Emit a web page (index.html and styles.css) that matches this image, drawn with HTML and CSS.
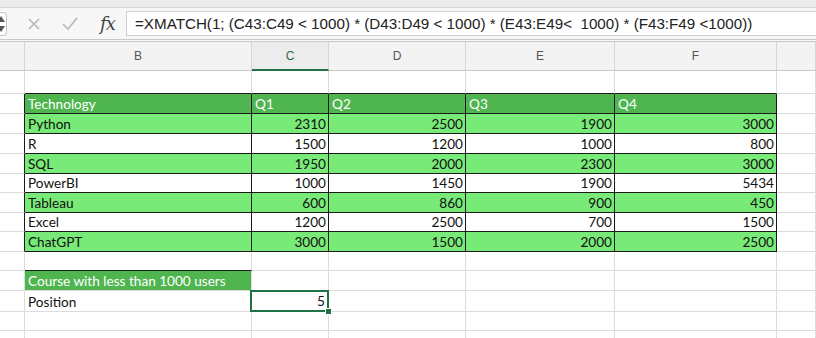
FILE: index.html
```html
<!DOCTYPE html>
<html>
<head>
    <title>XMATCH</title>
    <link rel="stylesheet" href="styles.css">
</head>
<body>
    <div class="topstrip"></div>
    <div class="formulabar">
        <div class="spinner">
            <svg width="10" height="22" viewBox="0 0 10 22">
                <path d="M0 9 L4 3 L8 9 Z" fill="#555"/>
                <path d="M0 13 L4 19 L8 13 Z" fill="#555"/>
            </svg>
        </div>
        <svg class="fbicon" width="14" height="14" viewBox="0 0 14 14">
            <path d="M2 2 L12 12 M12 2 L2 12" stroke="#b8b8b8" stroke-width="1.6" fill="none"/>
        </svg>
        <svg class="fbicon check" width="16" height="14" viewBox="0 0 16 14">
            <path d="M1 7 L6 12 L15 1" stroke="#b8b8b8" stroke-width="1.6" fill="none"/>
        </svg>
        <span class="fx">fx</span>
        <div class="formula">=XMATCH(1; (C43:C49 &lt; 1000) * (D43:D49 &lt; 1000) * (E43:E49&lt;&nbsp; 1000) * (F43:F49 &lt;1000))</div>
    </div>

    <div class="sheet">
        <div class="row colheads">
            <div class="c"></div><div class="c">B</div><div class="c active">C</div><div class="c">D</div><div class="c">E</div><div class="c">F</div><div class="c"></div>
        </div>

        <div class="row h23 above">
            <div class="c"></div><div class="c"></div><div class="c"></div><div class="c"></div><div class="c"></div><div class="c"></div><div class="c"></div>
        </div>

        <div class="row h20 tbl head">
            <div class="c"></div><div class="c">Technology</div><div class="c">Q1</div><div class="c">Q2</div><div class="c">Q3</div><div class="c">Q4</div><div class="c"></div>
        </div>
        <div class="row h20 tbl light">
            <div class="c"></div><div class="c">Python</div><div class="c n">2310</div><div class="c n">2500</div><div class="c n">1900</div><div class="c n">3000</div><div class="c"></div>
        </div>
        <div class="row h20 tbl">
            <div class="c"></div><div class="c">R</div><div class="c n">1500</div><div class="c n">1200</div><div class="c n">1000</div><div class="c n">800</div><div class="c"></div>
        </div>
        <div class="row h20 tbl light">
            <div class="c"></div><div class="c">SQL</div><div class="c n">1950</div><div class="c n">2000</div><div class="c n">2300</div><div class="c n">3000</div><div class="c"></div>
        </div>
        <div class="row h19 tbl">
            <div class="c"></div><div class="c">PowerBI</div><div class="c n">1000</div><div class="c n">1450</div><div class="c n">1900</div><div class="c n">5434</div><div class="c"></div>
        </div>
        <div class="row h20 tbl light">
            <div class="c"></div><div class="c">Tableau</div><div class="c n">600</div><div class="c n">860</div><div class="c n">900</div><div class="c n">450</div><div class="c"></div>
        </div>
        <div class="row h19 tbl">
            <div class="c"></div><div class="c">Excel</div><div class="c n">1200</div><div class="c n">2500</div><div class="c n">700</div><div class="c n">1500</div><div class="c"></div>
        </div>
        <div class="row h20 tbl light">
            <div class="c"></div><div class="c">ChatGPT</div><div class="c n">3000</div><div class="c n">1500</div><div class="c n">2000</div><div class="c n">2500</div><div class="c"></div>
        </div>

        <div class="row h19 spacer">
            <div class="c"></div><div class="c"></div><div class="c"></div><div class="c"></div><div class="c"></div><div class="c"></div><div class="c"></div>
        </div>
        <div class="row h20 result">
            <div class="c"></div><div class="c">Course with less than 1000 users</div><div class="c"></div><div class="c"></div><div class="c"></div><div class="c"></div><div class="c"></div>
        </div>
        <div class="row h20">
            <div class="c"></div><div class="c">Position</div><div class="c n selected">5<span class="handle"></span></div><div class="c"></div><div class="c"></div><div class="c"></div><div class="c"></div>
        </div>
        <div class="row h20">
            <div class="c"></div><div class="c"></div><div class="c"></div><div class="c"></div><div class="c"></div><div class="c"></div><div class="c"></div>
        </div>
        <div class="row h20">
            <div class="c"></div><div class="c"></div><div class="c"></div><div class="c"></div><div class="c"></div><div class="c"></div><div class="c"></div>
        </div>
    </div>
</body>
</html>
```

FILE: styles.css
```css
body {
    margin: 0;
    background: #fff;
    font-family: Lato, "Liberation Sans", sans-serif;
    overflow: hidden;
}
.topstrip {
    height: 7px;
    background: #ececec;
    border-bottom: 1px solid #d4d4d4;
}
.formulabar {
    height: 31px;
    display: flex;
    align-items: center;
    background: #f7f7f7;
    border-bottom: 3px double #c9c9c9;
}
.spinner {
    width: 8px;
    height: 22px;
    margin-left: -2px;
    border: 1px solid #c4c4c4;
    border-left: none;
    border-radius: 0 4px 4px 0;
    background: #fff;
    overflow: hidden;
}
.spinner svg {
    display: block;
    margin-left: -1px;
}
.fbicon {
    margin-left: 20px;
}
.check {
    margin-left: 21px;
}
.fx {
    font-family: "DejaVu Serif", "Liberation Serif", serif;
    font-style: italic;
    font-size: 18px;
    color: #444;
    margin-left: 22px;
    width: 24px;
    letter-spacing: -1px;
}
.formula {
    flex: 1;
    height: 23px;
    margin-left: 2px;
    padding-left: 8px;
    background: #fff;
    border: 1px solid #cfcfcf;
    border-right: none;
    font-family: "Liberation Sans", Arial, sans-serif;
    font-size: 15.2px;
    line-height: 23px;
    color: #222;
    white-space: nowrap;
}
.sheet {
    display: flex;
    flex-direction: column;
}
.row {
    display: grid;
    grid-template-columns: 25px 227px 77px 137px 149px 162px 1fr;
    font-size: 13.6px;
    color: #111;
}
.h23 { height: 23px; }
.h20 { height: 20px; }
.h19 { height: 19px; }
.c {
    box-sizing: border-box;
    border-right: 1px solid #dcdcdc;
    border-bottom: 1px solid #dcdcdc;
    padding: 0 3px;
    display: flex;
    align-items: flex-end;
    line-height: 18px;
    white-space: nowrap;
    position: relative;
}
.n {
    justify-content: flex-end;
    padding-right: 2px;
}
.colheads {
    height: 29px;
    background: #f3f3f3;
}
.colheads .c {
    justify-content: center;
    align-items: center;
    font-family: "Liberation Sans", Arial, sans-serif;
    font-size: 12px;
    color: #555;
    border-bottom: 1px solid #c8c8c8;
    border-right-color: #d6d6d6;
}
.colheads .active {
    color: #217346;
    border-bottom: 2px solid #217346;
    background: #ececec;
}
.above .c:nth-child(n+2):nth-child(-n+6),
.tbl .c:nth-child(n+2):nth-child(-n+6),
.spacer .c:nth-child(2) {
    border-bottom: 1px solid #1a1a1a;
}
.tbl .c:nth-child(-n+6) {
    border-right: 1px solid #1a1a1a;
}
.head .c:nth-child(n+2):nth-child(-n+6) {
    background: #4fb54f;
    color: #fff;
}
.light .c:nth-child(n+2):nth-child(-n+6) {
    background: #78ea78;
}
.result .c:nth-child(2) {
    background: #4fb54f;
    color: #fff;
}
.selected {
    border: 2px solid #217346;
    margin: -1px 0 0 -2px;
    width: calc(100% + 2px);
    z-index: 2;
}
.handle {
    position: absolute;
    right: -5px;
    bottom: -5px;
    width: 7px;
    height: 7px;
    background: #217346;
    border: 1px solid #fff;
    box-sizing: border-box;
}
```
